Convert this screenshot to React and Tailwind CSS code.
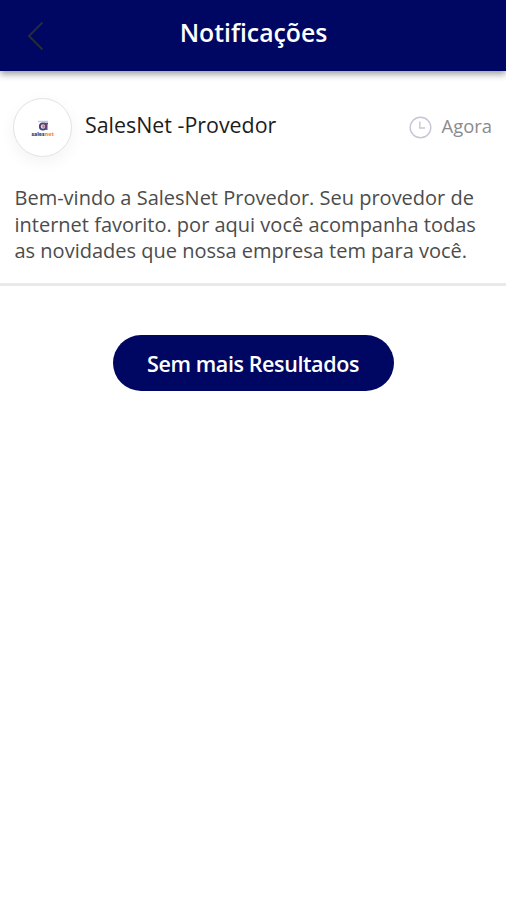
const notifications = [
  {
    id: 1,
    sender: 'SalesNet -Provedor',
    time: 'Agora',
    lines: [
      'Bem-vindo a SalesNet Provedor. Seu provedor de',
      'internet favorito. por aqui você acompanha todas',
      'as novidades que nossa empresa tem para você.',
    ],
  },
]

function Header({ title }) {
  return (
    <header className="relative flex h-[71px] items-center bg-[#000762] shadow-[0_3px_7px_rgba(0,0,0,0.4)]">
      <button type="button" aria-label="Voltar" className="w-[70px] pl-[27px]">
        <svg className="h-[30px] w-[18px]" viewBox="0 0 18 30" fill="none" stroke="#252c38" strokeWidth="2">
          <path d="M15.5 1.5 L2 15 L15.5 28.5" />
        </svg>
      </button>
      <h1 className="flex-1 pr-[69px] pb-[5px] text-center text-[24.8px] font-semibold whitespace-nowrap text-white">
        {title}
      </h1>
    </header>
  )
}

function Avatar() {
  return (
    <div className="flex size-[59px] shrink-0 items-center justify-center rounded-full border border-[#e3e3e5] bg-white shadow-[0_5px_16px_rgba(0,0,0,0.05)]">
      <svg className="mt-1 h-[18px] w-[24px]" viewBox="0 0 24 18">
        <path d="M7 1.5 H17" stroke="#c9c4dc" strokeWidth="1.5" />
        <circle cx="12" cy="6.5" r="3.2" fill="#dcd2e6" stroke="#41427e" strokeWidth="1.8" />
        <path d="M13 3.5 H17 M15.8 3.5 V10" stroke="#5a4a7c" strokeWidth="1.4" />
        <circle cx="12.5" cy="6.5" r="1.2" fill="#d66a60" />
        <text x="0.5" y="15.5" fontSize="5.2" fontWeight="800" textLength="13" lengthAdjust="spacingAndGlyphs" fill="#343b73">
          sales
        </text>
        <text x="13.8" y="15.5" fontSize="5.2" fontWeight="800" textLength="9" lengthAdjust="spacingAndGlyphs" fill="#f58a52">
          net
        </text>
      </svg>
    </div>
  )
}

function ClockIcon() {
  return (
    <svg className="size-[23px]" viewBox="0 0 23 23" fill="none" stroke="#c6c6d8" strokeWidth="1.4">
      <circle cx="11.5" cy="11.5" r="10.3" />
      <path d="M10.8 5.5 V12 H16" />
    </svg>
  )
}

function NotificationItem({ sender, time, lines }) {
  return (
    <article className="border-b-[3px] border-[#e9e9e9] pt-[26px] pb-[18px]">
      <div className="flex h-[60px] items-center pr-3.5 pl-[13px]">
        <Avatar />
        <h2 className="ml-[13px] flex-1 pb-[3px] text-[21.4px] whitespace-nowrap text-[#1c1c1c]">{sender}</h2>
        <ClockIcon />
        <span className="ml-2.5 pb-0.5 text-[18.4px] text-[#8b8b8b]">{time}</span>
      </div>
      <p className="mt-[28px] pl-[14.5px] text-[20px] leading-[26.7px] text-[#4c4c4c]">
        {lines.map(line => (
          <span key={line} className="block whitespace-nowrap">{line}</span>
        ))}
      </p>
    </article>
  )
}

export default function App() {
  return (
    <div className="min-h-screen overflow-hidden bg-white font-['Open_Sans',sans-serif]">
      <Header title="Notificações" />
      <main>
        {notifications.map(item => (
          <NotificationItem key={item.id} {...item} />
        ))}
        <div className="mt-[49px] flex justify-center">
          <button
            type="button"
            className="h-[56px] w-[281px] rounded-full bg-[#000762] pt-[3px] text-[21.5px] font-semibold tracking-[-0.4px] whitespace-nowrap text-white"
          >
            Sem mais Resultados
          </button>
        </div>
      </main>
    </div>
  )
}
